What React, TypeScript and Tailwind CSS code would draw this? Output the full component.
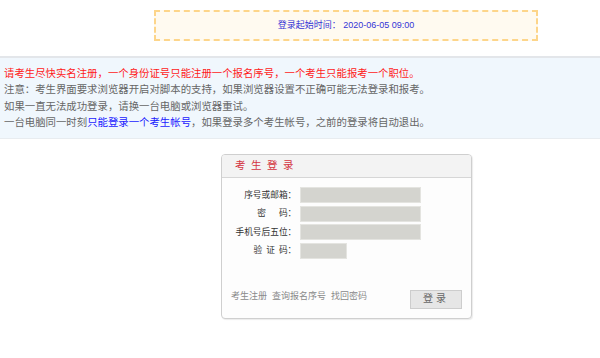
import React from 'react';

const font = { fontFamily: '"Liberation Sans", "Noto Sans CJK SC", sans-serif' };

const Colon = () => <span className="inline-block w-[4.4px] tracking-normal overflow-visible">：</span>;

const Field = ({ label, short }: { label: React.ReactNode; short?: boolean }) => (
  <div className="flex items-center h-[16px]">
    <div className="w-[70px] text-right text-[8.7px] leading-none text-[#333] whitespace-nowrap">{label}</div>
    <div className="w-[8px]" />
    <div
      className={`${short ? 'w-[47px]' : 'w-[121px]'} h-[16px] bg-[#d4d4cf] border border-[#e4e4e0]`}
    />
  </div>
);

export default function App() {
  return (
    <div className="w-[600px] h-[358px] bg-white overflow-hidden" style={font}>
      {/* start time banner */}
      <div className="pt-[10px]">
        <div className="ml-[154px] w-[384px] h-[31px] border-2 border-dashed border-[#fdd58a] bg-[#fffaf0] flex items-center justify-center">
          <span className="text-[9px] text-[#3434d6]">
            登录起始时间：&nbsp;2020-06-05 09:00
          </span>
        </div>
      </div>

      {/* notice */}
      <div className="mt-[15px] bg-[#f0f7fd] border-t-2 border-[#e3e6ea] border-b border-b-[#e8ecf0] px-[4px] pt-[8px] pb-[7px] text-[10.4px] leading-[16.3px] text-[#666]">
        <p className="text-[#ff1a1a]">
          请考生尽快实名注册，一个身份证号只能注册一个报名序号，一个考生只能报考一个职位。
        </p>
        <p>注意：考生界面要求浏览器开启对脚本的支持，如果浏览器设置不正确可能无法登录和报考。</p>
        <p>如果一直无法成功登录，请换一台电脑或浏览器重试。</p>
        <p>
          一台电脑同一时刻<span className="text-[#1a1aff]">只能登录一个考生帐号</span>
          ，如果登录多个考生帐号，之前的登录将自动退出。
        </p>
      </div>

      {/* login card */}
      <div className="mt-[15px] ml-[221px] w-[251px] border border-[#cfcfcf] rounded-[4px] bg-[#fdfdfd] shadow-[1px_1px_1px_rgba(0,0,0,0.08)] overflow-hidden">
        <div className="h-[23px] bg-[#f3f3f3] border-b border-[#d6d6d6] flex items-center pl-[13px]">
          <span className="text-[10.5px] text-[#d4343f] tracking-[5.5px]">考生登录</span>
        </div>
        <div className="pt-[9px] pb-[9px]">
          <div className="flex flex-col gap-[2.5px]">
            <Field label={<>序号或邮箱<Colon /></>} />
            <Field label={<>密<span className="inline-block w-[13px]" />码<Colon /></>} />
            <Field label={<>手机号后五位<Colon /></>} />
            <Field label={<><span className="tracking-[4px]">验证</span>码<Colon /></>} short />
          </div>
          <div className="mt-[31px] flex items-center justify-between pl-[9px] pr-[9px]">
            <div className="flex gap-[5px] text-[9px] text-[#8a8a8a] mt-[-4px]">
              <span>考生注册</span>
              <span>查询报名序号</span>
              <span>找回密码</span>
            </div>
            <button className="w-[52px] h-[19px] bg-[#e6e6e6] border border-[#cdcdcd] text-[10px] text-[#666] tracking-[3px] leading-none">
              登录
            </button>
          </div>
        </div>
      </div>
    </div>
  );
}
